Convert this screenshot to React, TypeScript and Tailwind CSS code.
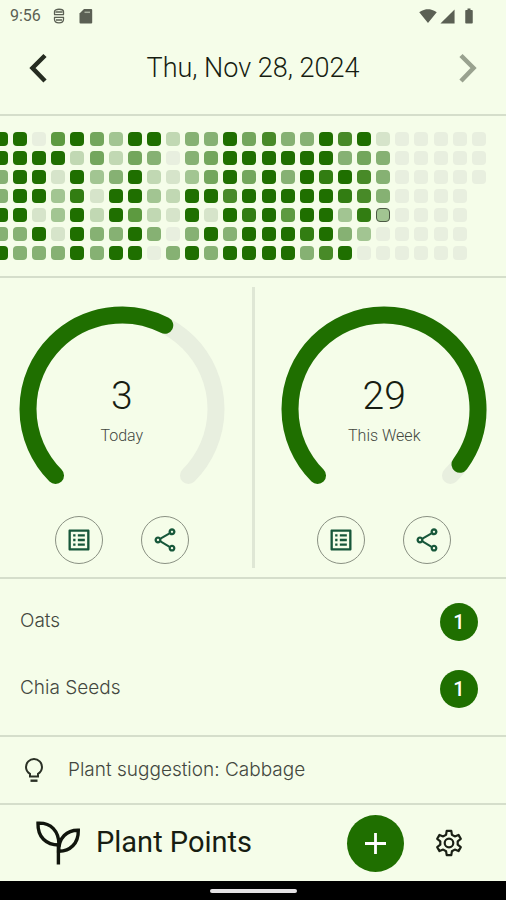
import React from 'react'
import {
  MdBatteryFull,
  MdOutlineListAlt,
  MdOutlineShare,
  MdSignalCellular4Bar,
  MdSignalWifi4Bar,
} from 'react-icons/md'

// one string per weekday, one digit per week, '-' for no cell
const HEATMAP = [
  '99069539924495744979100000',
  '99992525404599999945400000',
  '49919349213595949897400000',
  '4993819932997999998740000-',
  '9913929621919896993830000-',
  '4491944940494999894300000-',
  '9444949904949999479000000-',
]

const LEVELS: Record<string, string> = {
  '0': 'bg-[#e8efdf]',
  '1': 'bg-[#d6e4ca]',
  '2': 'bg-[#c1d8b3]',
  '3': 'bg-[#a2c592]',
  '4': 'bg-[#86b173]',
  '5': 'bg-[#73a65c]',
  '6': 'bg-[#5d9a40]',
  '7': 'bg-[#488a28]',
  '8': 'bg-[#327d12]',
  '9': 'bg-[#1f6f00]',
  '-': 'invisible',
}

const SELECTED = { row: 4, col: 20 }

const PLANTS = [
  { name: 'Oats', points: 1 },
  { name: 'Chia Seeds', points: 1 },
]

function StatusBar() {
  return (
    <div className="flex h-8 items-center justify-between pl-[10px] pr-7 text-[#5b6054]">
      <div className="flex items-center gap-3">
        <span className="text-base">9:56</span>
        <svg width="12" height="16" viewBox="0 0 12 16" fill="none" stroke="currentColor" strokeWidth="1.3">
          <path d="M1.500 6.500V3.500C1.500 0.500 10.500 0.500 10.500 3.500v3M2.500 4h7M1 6.700h10M1 9.300h10M1.500 9.300v2C1.500 16 10.500 16 10.500 11.300v-2M3 12h6" />
        </svg>
        <svg width="14" height="16" viewBox="0 0 14 16" fill="currentColor" className="ml-[2px]">
          <path d="M5 1h7.200a1 1 0 0 1 1 1v12.500a1 1 0 0 1-1 1H1.500a1 1 0 0 1-1-1V5.500z" />
          <path d="M5.500 4.300h5.500" stroke="#a9b09f" strokeWidth="1.500" />
        </svg>
      </div>
      <div className="flex items-center gap-[2px]">
        <MdSignalWifi4Bar size={18} />
        <MdSignalCellular4Bar size={17} />
        <MdBatteryFull size={18} className="ml-[2px]" />
      </div>
    </div>
  )
}

function Heatmap() {
  return (
    <div className="overflow-hidden border-b-2 border-[#d5decb] py-4">
      <div className="-ml-[6px] mr-5 flex flex-col gap-[5px]">
        {HEATMAP.map((line, row) => (
          <div key={row} className="flex justify-between">
            {line.split('').map((level, col) => (
              <div
                key={col}
                className={`size-[14px] shrink-0 rounded-[4px] ${LEVELS[level]} ${
                  row === SELECTED.row && col === SELECTED.col ? 'border border-[#4c5a44]' : ''
                }`}
              />
            ))}
          </div>
        ))}
      </div>
    </div>
  )
}

function Gauge({ value, goal, label }: { value: number; goal: number; label: string }) {
  // the track is three quarters of a circle, open at the bottom
  const arc = 75
  const filled = arc * Math.min(value / goal, 1)

  return (
    <section className="flex flex-1 flex-col items-center pb-1 pt-[19px]">
      <div className="grid size-[206px] place-items-center">
        <svg viewBox="0 0 206 206" className="col-start-1 row-start-1 size-full" fill="none" strokeWidth="17" strokeLinecap="round">
          <g transform="rotate(135 103 103)">
            <circle cx="103" cy="103" r="94" pathLength="100" stroke="#e8efdf" strokeDasharray={`${arc} 100`} />
            <circle cx="103" cy="103" r="94" pathLength="100" stroke="#1f6f00" strokeDasharray={`${filled} 100`} />
          </g>
        </svg>
        <div className="col-start-1 row-start-1 pt-[2px] text-center">
          <div className="text-[39px] font-light leading-[48px] text-[#171d12]">{value}</div>
          <div className="mt-1 text-base font-light text-[#43483f]">{label}</div>
        </div>
      </div>
      <div className="mt-1 flex gap-[38px]">
        <button aria-label={`${label} list`} className="grid size-12 place-items-center rounded-full border border-[#8a9183] text-[#17573a]">
          <MdOutlineListAlt size={28} />
        </button>
        <button aria-label={`Share ${label}`} className="grid size-12 place-items-center rounded-full border border-[#8a9183] text-[#17573a]">
          <MdOutlineShare size={28} />
        </button>
      </div>
    </section>
  )
}

function Sprout() {
  return (
    <svg width="48" height="48" viewBox="0 0 48 48" fill="none" stroke="#11150d" strokeWidth="3.4">
      <path d="M4 4.2C17 3.6 25 12 25 26C12 26 3.6 18 4 4.2Z" />
      <path d="M44.3 11.2C33 11 24.6 18.5 24.6 32.2C36 32.4 44.6 24.5 44.3 11.2Z" />
      <path d="M24.4 24v21.5" />
    </svg>
  )
}

export default function App() {
  return (
    <div className="flex min-h-screen flex-col bg-[#f5fde9] font-['Roboto',sans-serif] text-[#171d12]">
      <StatusBar />

      <header className="flex items-center justify-between border-b-2 border-[#d5decb] px-[26px] pb-7 pt-[18px]">
        <button aria-label="Previous day">
          <svg width="24" height="36" viewBox="0 0 24 36" fill="none" stroke="#252c20" strokeWidth="4.5">
            <path d="M19 5.5L6.5 18L19 31" />
          </svg>
        </button>
        <h1 className="text-[27px] font-light leading-9">Thu, Nov 28, 2024</h1>
        <button aria-label="Next day">
          <svg width="24" height="36" viewBox="0 0 24 36" fill="none" stroke="#99a28f" strokeWidth="4.5">
            <path d="M5 5.5L17.5 18L5 31" />
          </svg>
        </button>
      </header>

      <Heatmap />

      <main className="flex flex-1 flex-col">
        <div className="flex border-b-2 border-[#d5decb] py-[9px]">
          <Gauge value={3} goal={5} label="Today" />
          <div className="mx-2 w-[3px] bg-[#dfe7d5]" />
          <Gauge value={29} goal={30} label="This Week" />
        </div>

        <ul className="flex-1 py-[9px]">
          {PLANTS.map((plant) => (
            <li key={plant.name} className="flex h-[67px] items-center justify-between pl-5 pr-7">
              <span className="font-['Inter',sans-serif] text-[19px] font-light text-[#43483f]">{plant.name}</span>
              <span className="grid size-[38px] place-items-center rounded-full bg-[#1f6f00] text-xl font-medium text-white">
                {plant.points}
              </span>
            </li>
          ))}
        </ul>

        <div className="flex h-[68px] items-center gap-5 border-t-2 border-[#d5decb] px-5">
          <svg width="28" height="28" viewBox="0 0 28 28" fill="none" stroke="#2b3126" strokeWidth="2">
            <path d="M10 20.5v-2.6C7.600 16.400 6 14 6 11a8 8 0 0 1 16 0c0 3-1.600 5.400-4 6.900v2.600z" />
            <path d="M10.500 24.700h7" strokeWidth="2.400" />
          </svg>
          <p className="font-['Inter',sans-serif] text-[19px] font-light text-[#43483f]">Plant suggestion: Cabbage</p>
        </div>
      </main>

      <footer className="flex h-[78px] items-center border-t-2 border-[#d5decb] pl-[34px] pr-[41px]">
        <Sprout />
        <span className="ml-[14px] flex-1 text-[29px]">Plant Points</span>
        <button aria-label="Add plant" className="grid size-[57px] place-items-center rounded-full bg-[#1f6f00]">
          <svg width="21" height="21" viewBox="0 0 21 21" stroke="#fff" strokeWidth="2.8">
            <path d="M10.500 0v21M0 10.500h21" />
          </svg>
        </button>
        <button aria-label="Settings" className="ml-[29px]">
          <svg width="32" height="32" viewBox="0 0 32 32" fill="none" stroke="#1a2015" strokeWidth="2.2" strokeLinejoin="round">
            <path d="M13.700 3.800h4.600l.6 3.900 2.900 1.700 3.700-1.500 2.300 4-3.100 2.400v3.400l3.100 2.400-2.300 4-3.700-1.500-2.900 1.700-.6 3.900h-4.600l-.6-3.900-2.900-1.700-3.700 1.500-2.300-4 3.100-2.400v-3.400l-3.100-2.400 2.300-4 3.700 1.500 2.900-1.700z" />
            <circle cx="16" cy="16" r="4.300" />
          </svg>
        </button>
      </footer>

      <div className="grid h-[19px] place-items-center bg-black">
        <div className="h-1 w-[87px] rounded-full bg-[#e4e2e4]" />
      </div>
    </div>
  )
}
